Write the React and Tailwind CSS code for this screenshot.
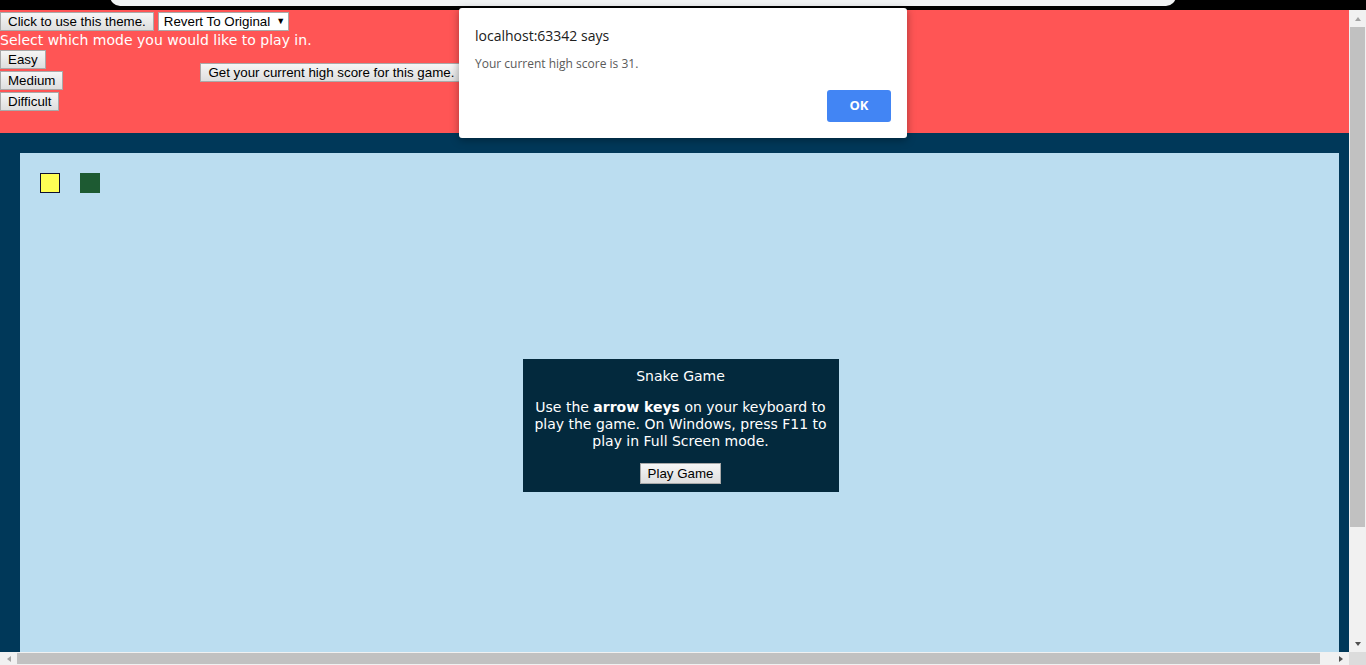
import React from 'react'

const btn =
  'h-[19px] px-[7px] bg-[#efefef] border border-[#a9a9a9] text-[13.33px] leading-[17px] text-black font-["Liberation_Sans",Arial,sans-serif] bg-gradient-to-b from-[#f6f6f6] to-[#dedede]'

function Tri({ dir, color }) {
  const pts = {
    up: '1,6 4,2 7,6',
    down: '1,2 4,6 7,2',
    left: '6,1 2,4 6,7',
    right: '2,1 6,4 2,7'
  }
  return (
    <svg width="8" height="8" viewBox="0 0 8 8">
      <polygon points={pts[dir]} fill={color} />
    </svg>
  )
}

function Header() {
  return (
    <div className="h-[123px] bg-[#ff5555] pt-[2px] font-['DejaVu_Sans',Verdana,sans-serif]">
      <div className="flex items-center gap-[4px]">
        <button className={btn}>Click to use this theme.</button>
        <div className="h-[19px] w-[131px] bg-white border border-[#a9a9a9] flex items-center pl-[5px] gap-[6px] text-[13.33px] text-black font-['Liberation_Sans',Arial,sans-serif]">
          <span>Revert To Original</span>
          <span className="text-[9px]">▼</span>
        </div>
      </div>
      <p className="text-[14px] leading-[19px] text-white">Select which mode you would like to play in.</p>
      <div className="flex items-start">
        <div className="flex flex-col gap-[2px]">
          <button className={btn + ' self-start'}>Easy</button>
          <button className={btn + ' self-start'}>Medium</button>
          <button className={btn + ' self-start'}>Difficult</button>
        </div>
        <button className={btn + ' ml-[137px] mt-[13px]'}>Get your current high score for this game.</button>
      </div>
    </div>
  )
}

function Board() {
  return (
    <div className="flex-1 bg-[#003859] pt-[20px] pl-[20px] pr-[10px] min-h-0">
      <div className="h-full bg-[#bbddf0] flex flex-col">
        <div className="flex gap-[20px] pt-[20px] pl-[20px]">
          <div className="w-[20px] h-[20px] bg-[#ffff55] border border-[#101030]" />
          <div className="w-[20px] h-[20px] bg-[#1d5a32]" />
        </div>
        <div className="flex justify-center mt-[166px] ml-[2px]">
          <div className="w-[316px] h-[133px] bg-[#03293d] text-white text-center font-['DejaVu_Sans',Verdana,sans-serif] text-[14px] leading-[17px] pt-[9px]">
            <p>Snake Game</p>
            <p className="mt-[14px] px-[6px]">
              Use the <strong className="font-bold">arrow keys</strong> on your keyboard to play the game. On Windows, press F11 to play in Full Screen mode.
            </p>
            <button className={btn + ' mt-[13px] h-[21px]'}>Play Game</button>
          </div>
        </div>
      </div>
    </div>
  )
}

function Dialog() {
  return (
    <div className="absolute left-[459px] top-[8px] w-[448px] h-[130px] bg-white rounded-[3px] shadow-[0_2px_8px_rgba(0,0,0,0.35)] font-['Open_Sans','Noto_Sans',sans-serif]">
      <p className="absolute left-[16px] top-[17px] text-[14px] text-[#202020]">localhost:63342 says</p>
      <p className="absolute left-[16px] top-[47px] text-[12px] text-[#5a5a5a]">Your current high score is 31.</p>
      <button className="absolute left-[368px] top-[82px] w-[64px] h-[32px] rounded-[3px] bg-[#4285f4] text-white text-[13px] font-bold">OK</button>
    </div>
  )
}

export default function App() {
  return (
    <div className="w-[1366px] h-[665px] overflow-hidden relative flex flex-col bg-black">
      <div className="h-[10px] bg-black relative shrink-0">
        <div className="absolute left-[110px] top-[-10px] w-[1066px] h-[16px] bg-[#f1f3f4] rounded-b-[10px]" />
      </div>
      <div className="flex flex-1 min-h-0">
        <div className="flex-1 flex flex-col min-w-0">
          <Header />
          <Board />
        </div>
        <div className="w-[17px] bg-[#f1f1f1] flex flex-col items-center">
          <div className="mt-[5px]"><Tri dir="up" color="#a3a3a3" /></div>
          <div className="w-[15px] h-[500px] bg-[#c1c1c1] mt-[4px]" />
          <div className="flex-1" />
          <div className="mb-[4px]"><Tri dir="down" color="#505050" /></div>
        </div>
      </div>
      <div className="h-[13px] bg-[#f1f1f1] flex items-center shrink-0">
        <div className="w-[17px] flex justify-center"><Tri dir="left" color="#a3a3a3" /></div>
        <div className="h-[11px] w-[1303px] bg-[#c1c1c1]" />
        <div className="flex-1" />
        <div className="w-[17px] flex justify-center"><Tri dir="right" color="#505050" /></div>
        <div className="w-[17px] h-full bg-[#dcdcdc]" />
      </div>
      <Dialog />
    </div>
  )
}
